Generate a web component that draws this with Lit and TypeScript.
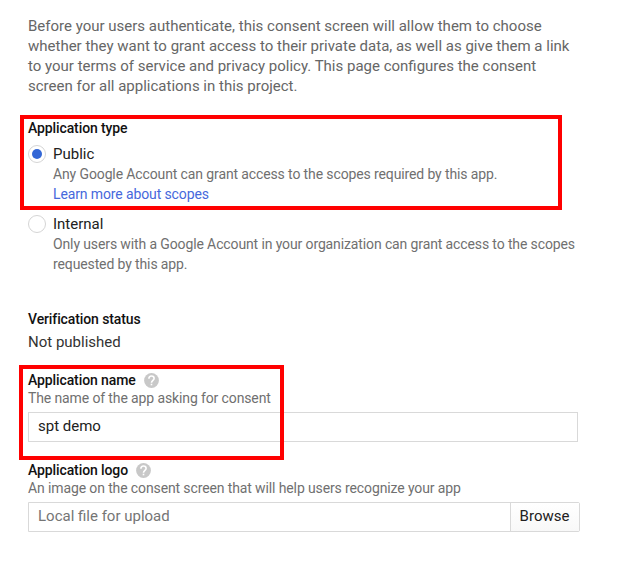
import { LitElement, html, css } from "lit";
import { customElement, property } from "lit/decorators.js";

@customElement("help-icon")
class HelpIcon extends LitElement {
  static styles = css`
    :host { display: block; width: 15px; height: 15px; }
    .icon { display: block; width: 15px; height: 15px; }
    .disc { fill: #c8c8c8; }
    .hook { fill: none; stroke: #fff; stroke-width: 1.6; }
    .dot { fill: #fff; }
  `;
  render() {
    return html`<svg class="icon" viewBox="0 0 15 15">
      <circle class="disc" cx="7.5" cy="7.5" r="7.4" />
      <path class="hook" d="M4.9 5.8C4.9 4 6 3 7.5 3S10.1 4 10.1 5.4C10.1 7.3 7.5 7.4 7.5 9.8" />
      <rect class="dot" x="6.7" y="10.7" width="1.6" height="1.6" />
    </svg>`;
  }
}

@customElement("radio-option")
class RadioOption extends LitElement {
  @property() label = "";
  @property({ type: Boolean }) checked = false;
  static styles = css`
    :host { display: flex; gap: 7px; }
    .ring {
      box-sizing: border-box; width: 18px; height: 18px; flex: none; margin-top: 1px;
      border: 1px solid #d5d5d5; border-radius: 50%; background: #fff;
      display: flex; align-items: center; justify-content: center;
    }
    .dot { width: 10px; height: 10px; border-radius: 50%; background: #3367d6; }
    .label { font-size: 15px; line-height: 20px; color: #212121; }
    .detail { font-size: 14px; line-height: 20px; letter-spacing: -0.12px; color: #707070; white-space: nowrap; }
  `;
  render() {
    return html`
      <div class="ring">${this.checked ? html`<div class="dot"></div>` : null}</div>
      <div>
        <div class="label">${this.label}</div>
        <div class="detail"><slot></slot></div>
      </div>`;
  }
}

@customElement("app-root")
class AppRoot extends LitElement {
  static styles = css`
    :host {
      display: block; position: relative; box-sizing: border-box; width: 626px; height: 565px;
      padding: 16px 0 0 28px; overflow: hidden; background: #fff;
      font-family: Roboto, sans-serif; color: #212121; white-space: nowrap;
    }
    .intro { font-size: 15px; line-height: 20px; color: #666; }
    .title { font-size: 14px; line-height: 20px; font-weight: 500; letter-spacing: -0.11px; color: #111; }
    .type { margin-top: 22px; }
    .public { margin-top: 6px; }
    .internal { margin-top: 10px; }
    .link { color: #4668dc; text-decoration: none; }
    .verification { margin-top: 35px; }
    .status { margin-top: 3px; font-size: 15px; line-height: 20px; color: #333; }
    .heading { display: flex; align-items: center; gap: 8px; height: 20px; }
    .name { margin-top: 18px; }
    .logo { margin-top: 18px; }
    .hint { font-size: 14px; line-height: 18px; letter-spacing: -0.12px; margin-top: -1px; color: #707070; }
    .field {
      box-sizing: border-box; display: flex; width: 550px; height: 30px; margin-top: 5px;
      border: 1px solid #d9d9d9; font-size: 15px; line-height: 27px;
    }
    .value { flex: 1; padding-left: 9px; }
    .file { width: 552px; border-radius: 0 2px 2px 0; }
    .placeholder { color: #757575; }
    .browse { box-sizing: border-box; width: 69px; padding-right: 1px; border-left: 1px solid #d9d9d9; background: linear-gradient(#fff, #f8f8f8); text-align: center; }
    .mark { position: absolute; box-sizing: border-box; border: 4px solid #f00; pointer-events: none; }
    .mark-type { left: 20px; top: 115px; width: 542px; height: 95px; }
    .mark-name { left: 19px; top: 365px; width: 265px; height: 95px; }
  `;
  render() {
    return html`
      <div class="intro">
        Before your users authenticate, this consent screen will allow them to choose<br />
        whether they want to grant access to their private data, as well as give them a link<br />
        to your terms of service and privacy policy. This page configures the consent<br />
        screen for all applications in this project.
      </div>
      <div class="title type">Application type</div>
      <radio-option class="public" label="Public" checked>
        Any Google Account can grant access to the scopes required by this app.<br />
        <a class="link">Learn more about scopes</a>
      </radio-option>
      <radio-option class="internal" label="Internal">
        Only users with a Google Account in your organization can grant access to the scopes<br />
        requested by this app.
      </radio-option>
      <div class="title verification">Verification status</div>
      <div class="status">Not published</div>
      <div class="heading name"><span class="title">Application name</span><help-icon></help-icon></div>
      <div class="hint">The name of the app asking for consent</div>
      <div class="field"><span class="value">spt demo</span></div>
      <div class="heading logo"><span class="title">Application logo</span><help-icon></help-icon></div>
      <div class="hint">An image on the consent screen that will help users recognize your app</div>
      <div class="field file">
        <span class="value placeholder">Local file for upload</span><span class="browse">Browse</span>
      </div>
      <div class="mark mark-type"></div>
      <div class="mark mark-name"></div>
    `;
  }
}
